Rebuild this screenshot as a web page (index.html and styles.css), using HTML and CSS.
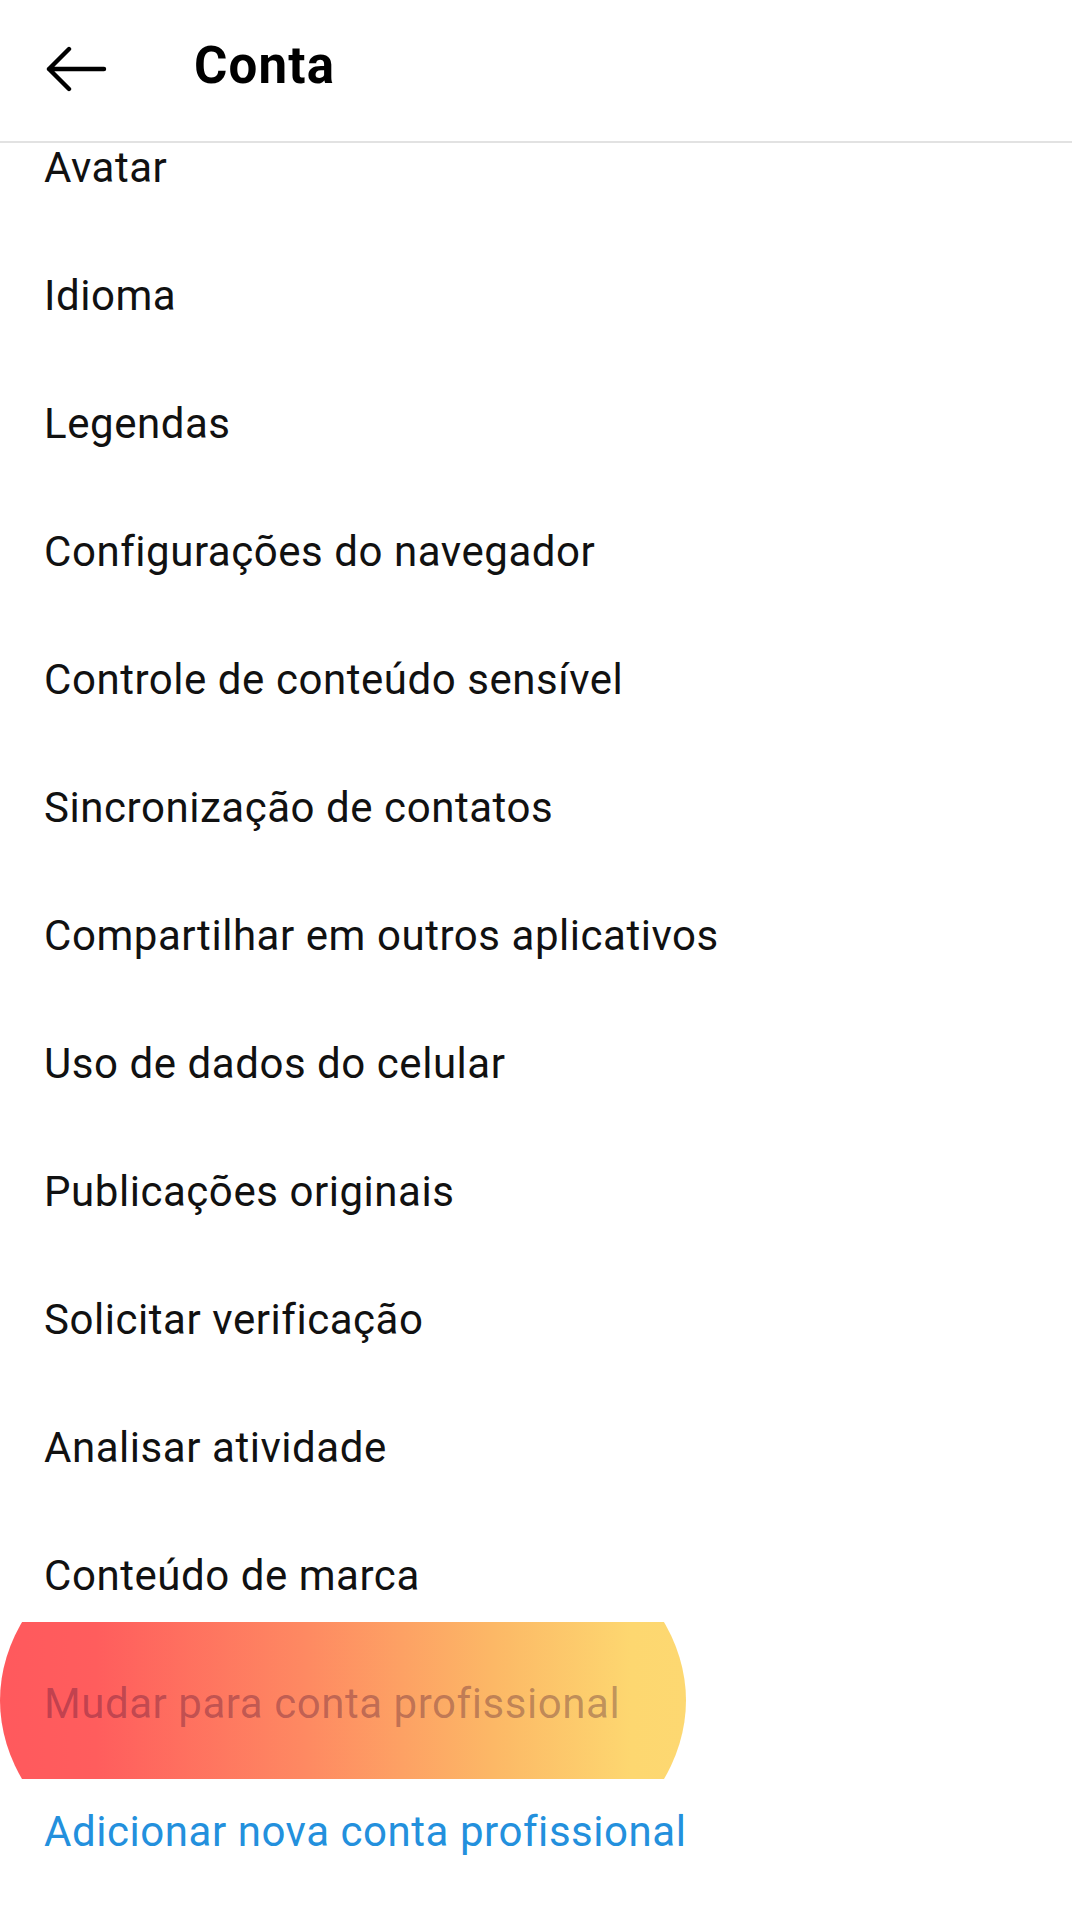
FILE: index.html
```html
<!DOCTYPE html>
<html lang="pt-BR">
<head>
<meta charset="utf-8">
<title>Conta</title>
<link rel="stylesheet" href="styles.css">
</head>
<body>
  <header class="topbar">
    <svg class="back" viewBox="0 0 62 46" width="62" height="46" aria-hidden="true">
      <path d="M59 23 H4 M24 3 L4 23 L24 43" fill="none" stroke="#000" stroke-width="4.4" stroke-linecap="round" stroke-linejoin="round"/>
    </svg>
    <h1 class="title">Conta</h1>
  </header>
  <main class="list">
    <div class="item">Avatar</div>
    <div class="item">Idioma</div>
    <div class="item">Legendas</div>
    <div class="item">Configurações do navegador</div>
    <div class="item">Controle de conteúdo sensível</div>
    <div class="item">Sincronização de contatos</div>
    <div class="item">Compartilhar em outros aplicativos</div>
    <div class="item">Uso de dados do celular</div>
    <div class="item">Publicações originais</div>
    <div class="item">Solicitar verificação</div>
    <div class="item">Analisar atividade</div>
    <div class="item">Conteúdo de marca</div>
    <div class="item item-highlight">Mudar para conta profissional</div>
    <div class="item item-link">Adicionar nova conta profissional</div>
  </main>
</body>
</html>
```
FILE: styles.css
```css
html, body {
  margin: 0;
  padding: 0;
  background: #ffffff;
}

body {
  width: 1080px;
  height: 1920px;
  overflow: hidden;
  font-family: Roboto, "Liberation Sans", Arial, sans-serif;
  color: #111111;
}

.topbar {
  display: flex;
  align-items: flex-start;
  height: 141px;
  width: 1072px;
  border-bottom: 2px solid #e2e2e2;
  box-sizing: content-box;
  background: #ffffff;
  position: relative;
  z-index: 1;
}

.back {
  display: block;
  margin-top: 46px;
  margin-left: 45px;
}

.title {
  margin: 37px 0 0 87px;
  font-size: 51px;
  line-height: 58px;
  font-weight: 700;
  color: #000000;
  letter-spacing: 1.2px;
}

.list {
  display: flex;
  flex-direction: column;
  margin-top: -39px;
}

.item {
  height: 128px;
  line-height: 128px;
  padding-left: 44px;
  font-size: 42px;
  font-weight: 400;
  letter-spacing: 0.55px;
  color: #111111;
  white-space: nowrap;
  box-sizing: border-box;
}

.item-highlight {
  width: 686px;
  height: 157px;
  margin-top: -18px;
  margin-bottom: -11px;
  padding-top: 18px;
  padding-bottom: 11px;
  background: linear-gradient(90deg, #ff595d 0%, #ff5d5d 14%, #fe8a62 45%, #fcb866 72%, #fdd770 92%, #fdd871 100%);
  clip-path: ellipse(343px 223px at 50% 50%);
  color: rgba(60, 10, 50, 0.32);
}

.item-link {
  color: #2390dd;
}
```
